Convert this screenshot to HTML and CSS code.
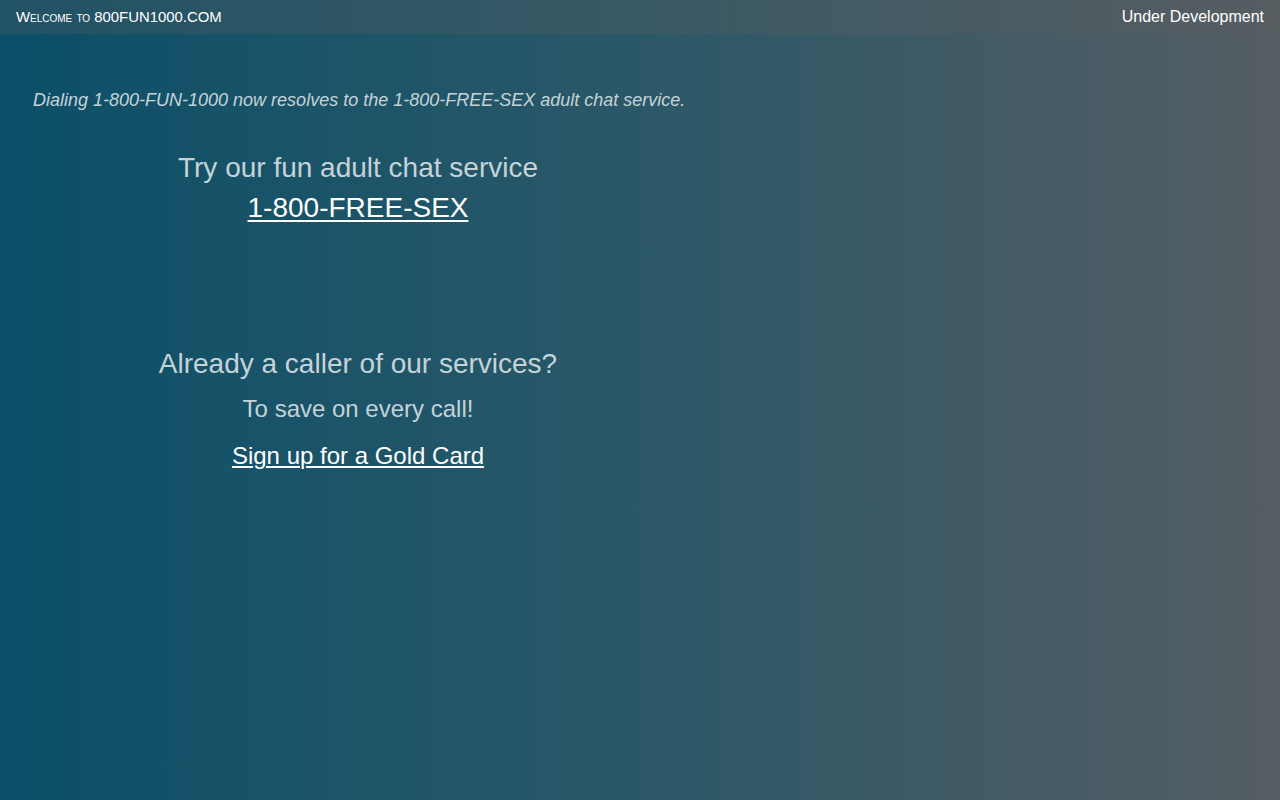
FILE: index.html
```html
<!DOCTYPE html>
<html lang="en">
<head>
<meta charset="utf-8">
<title>800FUN1000.COM</title>
<link rel="stylesheet" href="styles.css">
</head>
<body>
<header class="topbar">
  <div class="brand">Welcome to 800FUN1000.COM</div>
  <div class="status">Under Development</div>
</header>
<main class="content">
  <p class="notice">Dialing 1-800-FUN-1000 now resolves to the 1-800-FREE-SEX adult chat service.</p>
  <section class="column">
    <div class="promo">
      <div class="promo-title">Try our fun adult chat service</div>
      <a class="promo-link" href="#">1-800-FREE-SEX</a>
    </div>
    <div class="gold">
      <div class="gold-title">Already a caller of our services?</div>
      <div class="gold-sub">To save on every call!</div>
      <a class="gold-link" href="#">Sign up for a Gold Card</a>
    </div>
  </section>
</main>
</body>
</html>
```
FILE: styles.css
```css
html, body {
  margin: 0;
  padding: 0;
  height: 100%;
}
body {
  font-family: "Liberation Sans", Arial, sans-serif;
  background: linear-gradient(to right, #0b4f68 0%, #2b5868 50%, #555d63 100%);
  color: #c5d3d9;
  min-height: 800px;
}
.topbar {
  height: 34px;
  display: flex;
  align-items: center;
  justify-content: space-between;
  padding: 0 16px;
  background: rgba(95, 95, 95, 0.28);
  color: #ffffff;
}
.brand {
  font-size: 14.9px;
  font-variant: small-caps;
  letter-spacing: 0;
  padding-bottom: 1px;
}
.status {
  font-size: 16px;
  padding-top: 0;
}
.content {
  padding: 0 16px;
}
.notice {
  margin: 56px 0 0 17px;
  font-size: 18px;
  font-style: italic;
  line-height: 20px;
}
.column {
  width: 684px;
  text-align: center;
}
.promo {
  margin-top: 40px;
  display: flex;
  flex-direction: column;
  align-items: center;
}
.promo-title {
  font-size: 28px;
  line-height: 36px;
}
.promo-link {
  font-size: 28px;
  line-height: 44px;
  color: #ffffff;
  text-decoration: underline;
  text-decoration-thickness: 2px;
  text-underline-offset: 3px;
}
.gold {
  margin-top: 116px;
  display: flex;
  flex-direction: column;
  align-items: center;
}
.gold-title {
  font-size: 28px;
  line-height: 36px;
}
.gold-sub {
  margin-top: 13px;
  font-size: 24px;
  line-height: 28px;
}
.gold-link {
  margin-top: 19px;
  font-size: 24px;
  line-height: 28px;
  color: #ffffff;
  text-decoration: underline;
  text-decoration-thickness: 2px;
  text-underline-offset: 2px;
}
```
